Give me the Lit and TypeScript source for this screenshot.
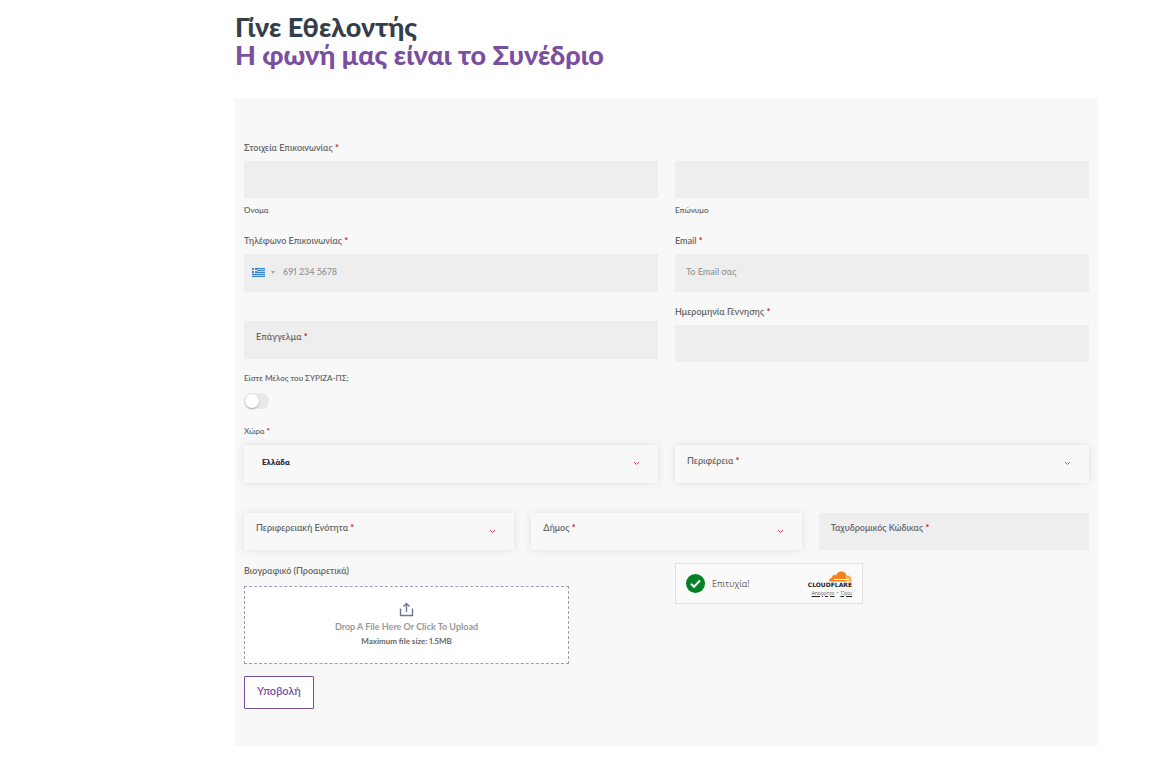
import { LitElement, html, css } from "lit";
import { customElement, property, state } from "lit/decorators.js";

const star = html`<span class="star">*</span>`;

@customElement("app-root")
export class AppRoot extends LitElement {
  @property() action = "#";
  @state() private member = false;

  static styles = css`
    :host {
      display: block;
      box-sizing: border-box;
      min-height: 100vh;
      padding: 13px 77px 19px 20%;
      background: #fff;
      color: #666;
      font: 600 9px/16px Lato, "Noto Sans", sans-serif;
      font-variant-numeric: proportional-nums;
    }
    *, *::before, *::after { box-sizing: border-box; }
    h1 {
      margin: 0 0 29px;
      color: #353f4b;
      font-size: 27px;
      line-height: 28px;
      font-weight: 900;
    }
    h1 span { display: block; }
    .accent { color: #7a4f9f; }
    form {
      display: flex;
      flex-direction: column;
      padding: 42px 9px 37px;
      background: #f8f8f8;
    }
    .row { display: grid; grid-template-columns: 1fr 1fr; column-gap: 17px; }
    .three { grid-template-columns: 1fr 1fr 1fr; margin-top: 30px; }
    .contact { margin-top: 17px; }
    .personal { margin-top: 12px; }
    .bottom { margin-top: 13px; }
    .cell { display: flex; flex-direction: column; min-width: 0; }
    .end { justify-content: flex-end; }
    .raised { padding-bottom: 3px; }
    fieldset { display: contents; }
    .label { line-height: 16px; margin-bottom: 5px; }
    .small { font-size: 8px; line-height: 12px; }
    .under { margin-top: 6px; }
    .star { color: #c02b2b; font-weight: 900; }
    input, select, button { font: inherit; font-variant-numeric: inherit; color: inherit; border-radius: 0; }
    .box {
      width: 100%;
      height: 37px;
      margin: 0;
      padding: 0 11px 3px;
      border: 0;
      background: #eee;
    }
    .tall { height: 38px; }
    .box::placeholder, .phone input::placeholder { color: #999; opacity: 1; }
    .phone { display: flex; align-items: center; padding: 0 8px 1px; }
    .country {
      display: flex;
      align-items: center;
      gap: 6px;
      margin: 0;
      padding: 0;
      border: 0;
      background: none;
    }
    .country svg { display: block; }
    .phone input {
      flex: 1;
      min-width: 0;
      margin: 0 0 0 8px;
      padding: 0 0 2px;
      border: 0;
      background: none;
    }
    .overlay { display: grid; }
    .overlay > * { grid-area: 1 / 1; }
    .overlay > label { padding: 8px 12px; pointer-events: none; z-index: 1; }
    .three .overlay > label { padding-top: 7px; }
    .overlay > svg { justify-self: end; align-self: center; margin: 0 18px 1px 0; pointer-events: none; }
    select.box {
      appearance: none;
      padding: 0 18px 4px;
      background: #f8f8f8;
      box-shadow: 0 0 8px rgba(0, 0, 0, 0.1);
      color: #2d2a3d;
      font-size: 8px;
      font-weight: 800;
    }
    .member { margin-top: 10px; gap: 9px; align-items: flex-start; }
    .toggle {
      appearance: none;
      display: flex;
      align-items: center;
      width: 25px;
      height: 16px;
      margin: 0;
      padding: 0 1px;
      border-radius: 8px;
      background: #e8e8e8;
    }
    .toggle::before {
      content: "";
      width: 14px;
      height: 14px;
      border-radius: 50%;
      background: #fff;
      box-shadow: 0 1px 2px rgba(0, 0, 0, 0.3);
    }
    .toggle:checked { justify-content: flex-end; background: #7a4f9f; }
    .region { margin-top: 16px; }
    .region .small { margin-bottom: 8px; }
    .file { margin-bottom: 7px; }
    .drop {
      display: flex;
      flex-direction: column;
      align-items: center;
      width: 325px;
      max-width: 100%;
      height: 78px;
      padding-top: 15px;
      border: 1px dashed #9a9db5;
      background: #fff;
      color: #999;
      font-weight: 700;
    }
    .drop svg { margin-bottom: 2px; }
    .drop .small { color: #666; }
    .submit {
      align-self: flex-start;
      height: 33px;
      margin-top: 12px;
      padding: 0 12px 3px;
      border: 1px solid #7a4f9f;
      border-radius: 1px;
      background: #fff;
      color: #7a4f9f;
      font-size: 11px;
      line-height: 16px;
    }
    .captcha {
      display: flex;
      align-items: center;
      width: 188px;
      height: 41px;
      padding: 0 10px;
      border: 1px solid #e0e0e0;
      background: #fafafa;
      color: #232323;
      font-family: "Noto Sans", sans-serif;
      font-weight: 300;
    }
    .captcha > span { flex: 1; margin-left: 7px; }
    .brand { display: flex; flex-direction: column; align-items: flex-end; }
    .brand > span {
      font: 700 6px/6px "DejaVu Sans", sans-serif;
      color: #222;
    }
    .links { display: flex; gap: 2px; font-size: 5px; line-height: 8px; margin-top: 1px; }
    .links a { color: #232323; }
  `;

  private arrow() {
    return html`<svg width="7" height="5" viewBox="0 0 7 5" fill="none" stroke="#ee4165" aria-hidden="true">
      <path d="M1 1 L3.5 3.5 L6 1" />
    </svg>`;
  }

  private choice(id: string, label: string, tall = false) {
    return html`<div class="overlay">
      <select id=${id} class="box ${tall ? "tall" : ""}"><option value=""></option></select>
      <label for=${id}>${label} ${star}</label>
      ${this.arrow()}
    </div>`;
  }

  private text(id: string, label: string, tall = false) {
    return html`<div class="overlay">
      <input id=${id} class="box ${tall ? "tall" : ""}" type="text" />
      <label for=${id}>${label} ${star}</label>
    </div>`;
  }

  private flag() {
    return html`<svg width="13" height="9" viewBox="0 0 26 18" role="img" aria-label="Ελλάδα">
      <path fill="#b5d3ee" d="M0 0h26v18H0z" />
      <path stroke="#3a82c9" stroke-width="2" d="M0 1h26M0 5h26M0 9h26M0 13h26M0 17h26" />
      <path fill="#3a82c9" d="M0 0h10v10H0z" />
      <path stroke="#fff" stroke-width="2" d="M5 0v10M0 5h10" />
    </svg>`;
  }

  render() {
    return html`
      <h1><span>Γίνε Εθελοντής</span><span class="accent">Η φωνή μας είναι το Συνέδριο</span></h1>
      <form action=${this.action} @submit=${(e: Event) => e.preventDefault()}>
        <fieldset aria-labelledby="name-title">
          <div class="row">
            <div class="cell">
              <span class="label" id="name-title">Στοιχεία Επικοινωνίας ${star}</span>
              <input id="first" class="box" type="text" />
              <label class="small under" for="first">Όνομα</label>
            </div>
            <div class="cell end">
              <input id="last" class="box" type="text" />
              <label class="small under" for="last">Επώνυμο</label>
            </div>
          </div>
        </fieldset>

        <div class="row contact">
          <div class="cell">
            <label class="label" for="phone">Τηλέφωνο Επικοινωνίας ${star}</label>
            <div class="box tall phone">
              <button class="country" type="button">
                ${this.flag()}
                <svg width="4" height="3" viewBox="0 0 4 3" aria-hidden="true"><path fill="#a5a5b5" d="M0 0h4L2 3z" /></svg>
              </button>
              <input id="phone" type="tel" placeholder="691 234 5678" />
            </div>
          </div>
          <div class="cell">
            <label class="label" for="email">Email ${star}</label>
            <input id="email" class="box tall" type="email" placeholder="Το Email σας" />
          </div>
        </div>

        <div class="row personal">
          <div class="cell end raised">${this.text("job", "Επάγγελμα", true)}</div>
          <div class="cell">
            <label class="label" for="birth">Ημερομηνία Γέννησης ${star}</label>
            <input id="birth" class="box" type="text" />
          </div>
        </div>

        <div class="cell member">
          <label class="small" for="member">Είστε Μέλος του ΣΥΡΙΖΑ-ΠΣ;</label>
          <input
            id="member"
            class="toggle"
            type="checkbox"
            role="switch"
            .checked=${this.member}
            @change=${(e: Event) => (this.member = (e.target as HTMLInputElement).checked)}
          />
        </div>

        <div class="row region">
          <div class="cell">
            <label class="small" for="land">Χώρα ${star}</label>
            <div class="overlay">
              <select id="land" class="box tall"><option>Ελλάδα</option></select>
              ${this.arrow()}
            </div>
          </div>
          <div class="cell end">${this.choice("district", "Περιφέρεια", true)}</div>
        </div>

        <div class="row three">
          ${this.choice("unit", "Περιφερειακή Ενότητα")} ${this.choice("town", "Δήμος")}
          ${this.text("zip", "Ταχυδρομικός Κώδικας")}
        </div>

        <div class="row bottom">
          <div class="cell">
            <span class="label file" id="cv">Βιογραφικό (Προαιρετικά)</span>
            <button class="drop" type="button" aria-describedby="cv">
              <svg width="15" height="15" viewBox="0 0 15 15" fill="none" stroke="#70758f" stroke-width="1.4" aria-hidden="true">
                <path d="M1.5 6.5v7h12v-7M7.5 10V1.5M4.5 4.5l3-3 3 3" />
              </svg>
              <span>Drop A File Here Or Click To Upload</span>
              <span class="small">Maximum file size: 1.5MB</span>
            </button>
            <button class="submit" type="submit">Υποβολή</button>
          </div>
          <div class="cell">
            <div class="captcha">
              <svg width="19" height="19" viewBox="0 0 19 19" aria-hidden="true">
                <circle cx="9.5" cy="9.5" r="9.5" fill="#038127" />
                <path d="M5 9.8l3 3 6-6.3" fill="none" stroke="#fff" stroke-width="2" />
              </svg>
              <span>Επιτυχία!</span>
              <div class="brand">
                <svg width="23" height="11" viewBox="0 0 23 11" aria-hidden="true">
                  <path fill="#f6821f" d="M0 10.5C0 8 1.3 6.8 3.2 6.5 3 4 6 3.2 7 4.4 8 1.6 10 .4 12.3.4c2.9 0 5 2 5.4 4.6L16.5 10.5z" />
                  <path fill="#fbad41" d="M18.3 4.6c2.700-.3 4.500 1.900 4.400 5.900H16z" />
                  <path stroke="#fff" d="M5 8.5h12.5l3-.5" fill="none" />
                </svg>
                <span>CLOUDFLARE</span>
                <div class="links"><a href="#privacy">Απόρρητο</a><span>•</span><a href="#terms">Όροι</a></div>
              </div>
            </div>
          </div>
        </div>
      </form>
    `;
  }
}
